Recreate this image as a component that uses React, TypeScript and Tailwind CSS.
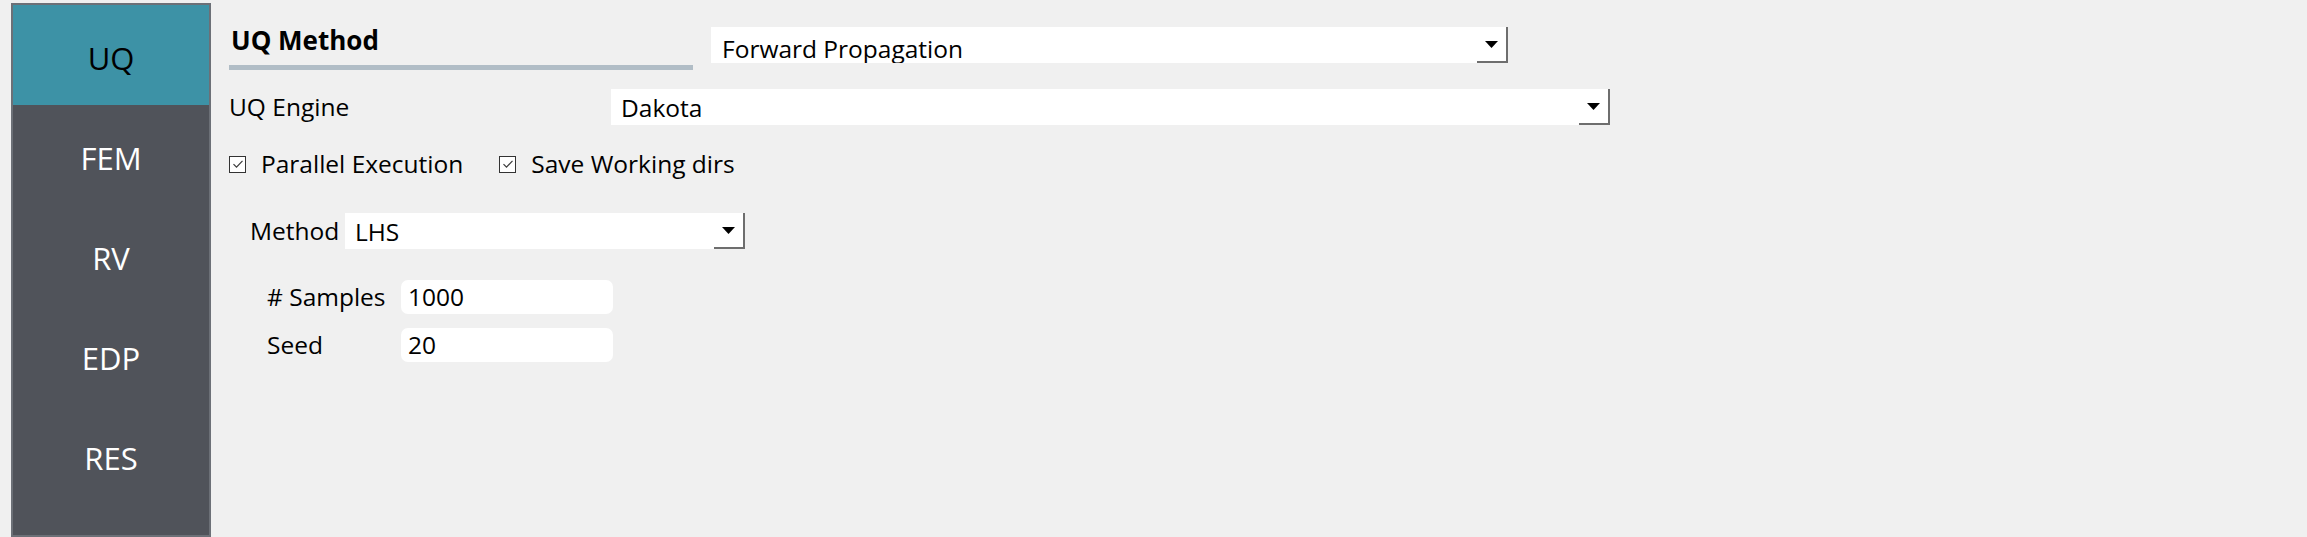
import React from "react";

const tabs = ["UQ", "FEM", "RV", "EDP", "RES"];

const ComboArrow = () => (
  <div className="flex h-full w-[31px] shrink-0 items-center justify-center border-b-2 border-r-2 border-[#6e6e6e] border-l-0 border-t-0">
    <svg width="13" height="7" viewBox="0 0 13 7">
      <path d="M0 0h13L6.5 7z" fill="#000" />
    </svg>
  </div>
);

interface ComboProps {
  value: string;
  className: string;
  textClass?: string;
}

const Combo = ({ value, className, textClass }: ComboProps) => (
  <div className={`flex h-[36px] overflow-hidden bg-white ${className}`}>
    <div className={`flex-1 overflow-hidden whitespace-nowrap ${textClass ? textClass : "flex items-center pl-[10px] pt-[2px]"}`}>
      {value}
    </div>
    <ComboArrow />
  </div>
);

const CheckBox = ({ label }: { label: string }) => (
  <div className="flex items-center">
    <div className="flex h-[17px] w-[17px] items-center justify-center border border-[#333] bg-white">
      <svg width="12" height="10" viewBox="0 0 12 10">
        <path d="M1.5 5.2l3 3L10.5 1.8" fill="none" stroke="#3a3a3a" strokeWidth="1.2" />
      </svg>
    </div>
    <span className="ml-[15px] leading-[24px]">{label}</span>
  </div>
);

const Field = ({ label, value }: { label: string; value: string }) => (
  <div className="ml-[38px] flex items-center">
    <span className="w-[134px] leading-[24px]">{label}</span>
    <div className="flex h-[34px] w-[212px] items-center rounded-[7px] bg-white pl-[7px] pt-[1px]">
      {value}
    </div>
  </div>
);

export default function App() {
  return (
    <div
      className="flex h-screen w-full bg-[#f0f0f0] text-[24.5px] text-black"
      style={{ fontFamily: '"Open Sans", "Noto Sans", sans-serif' }}
    >
      {/* left tab bar */}
      <div className="ml-[11px] mt-[3px] flex w-[200px] shrink-0 flex-col border-2 border-[#6c7077] bg-[#50535a]">
        {tabs.map((t, i) => (
          <div
            key={t}
            className={`flex h-[100px] shrink-0 items-center justify-center pt-[6px] text-[31px] ${
              i === 0 ? "bg-[#3d92a6] text-black" : "text-white"
            }`}
          >
            {t}
          </div>
        ))}
      </div>

      {/* UQ panel */}
      <div className="flex flex-1 flex-col pl-[18px] pt-[22px]">
        <div className="flex items-start">
          <div className="flex w-[464px] flex-col">
            <h2 className="pl-[2px] pt-[3px] text-[26px] font-bold leading-[30px]">UQ Method</h2>
            <div className="mt-[10px] h-[5px] bg-[#b1bdc6]" />
          </div>
          <Combo
            value="Forward Propagation"
            className="ml-[18px] mt-[5px] w-[797px]"
            textClass="pl-[11px] pt-[8px] leading-[28px]"
          />
        </div>

        <div className="mt-[19px] flex items-center">
          <span className="w-[382px] leading-[24px]">UQ Engine</span>
          <Combo value="Dakota" className="w-[999px]" />
        </div>

        <div className="mt-[27px] flex items-center gap-[36px]">
          <CheckBox label="Parallel Execution" />
          <CheckBox label="Save Working dirs" />
        </div>

        <div className="ml-[21px] mt-[37px] flex items-center">
          <span className="w-[95px] leading-[24px]">Method</span>
          <Combo value="LHS" className="w-[400px]" />
        </div>

        <div className="mt-[31px]">
          <Field label="# Samples" value="1000" />
        </div>
        <div className="mt-[14px]">
          <Field label="Seed" value="20" />
        </div>
      </div>
    </div>
  );
}
